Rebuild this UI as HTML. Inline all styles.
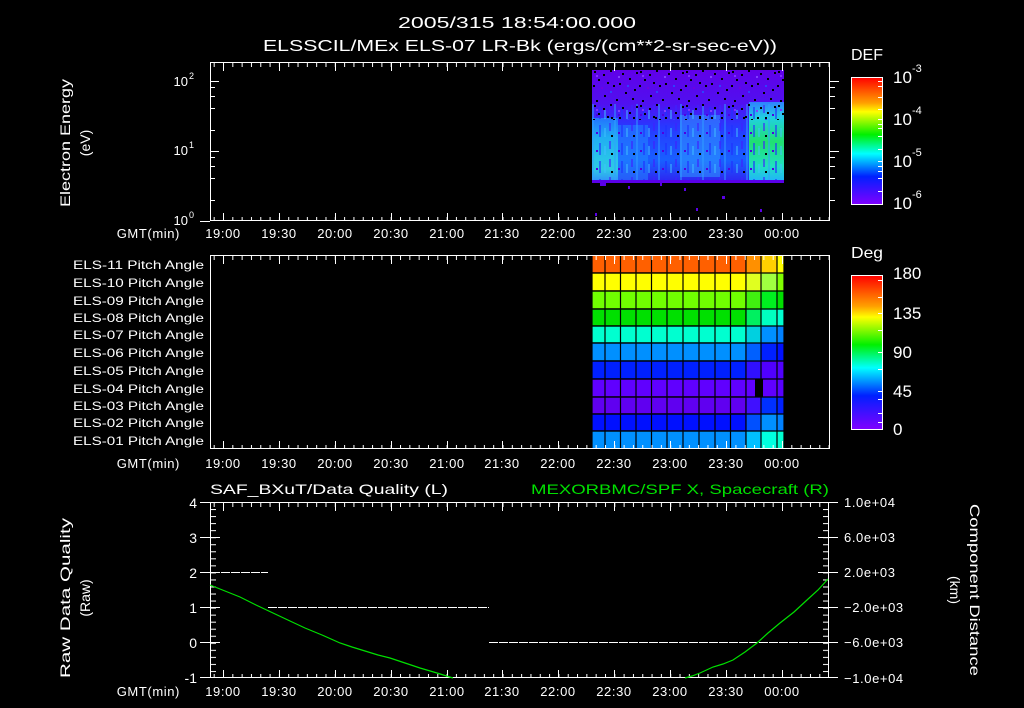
<!DOCTYPE html>
<html><head><meta charset="utf-8"><style>
html,body{margin:0;padding:0;background:#000;}
svg{display:block;}
text{font-family:"Liberation Sans",sans-serif;fill:#fff;}
.t{letter-spacing:0.6px;}
</style></head><body>
<svg width="1024" height="708" viewBox="0 0 1024 708" xmlns="http://www.w3.org/2000/svg">
<defs>
<pattern id="minT" patternUnits="userSpaceOnUse" x="223" y="0" width="9.3167" height="708"><rect x="0" y="0" width="1" height="708" fill="#fff"/></pattern>
<pattern id="dqY" patternUnits="userSpaceOnUse" x="0" y="502" width="1024" height="7.04"><rect x="0" y="0" width="1024" height="1" fill="#fff"/></pattern>
<linearGradient id="rain" x1="0" y1="0" x2="0" y2="1">
<stop offset="0" stop-color="#ff0000"/><stop offset="0.2" stop-color="#ffa000"/><stop offset="0.27" stop-color="#ffff00"/>
<stop offset="0.45" stop-color="#00f000"/><stop offset="0.6" stop-color="#00ffff"/><stop offset="0.78" stop-color="#0020ff"/><stop offset="1" stop-color="#8000ff"/>
</linearGradient>
<linearGradient id="bg1" x1="0" y1="0" x2="0" y2="1">
<stop offset="0" stop-color="#6000e8"/><stop offset="0.3" stop-color="#5010f0"/><stop offset="0.5" stop-color="#2838ff"/><stop offset="0.8" stop-color="#1860ff"/><stop offset="1" stop-color="#3020f0"/>
</linearGradient>
<linearGradient id="grn" x1="0" y1="0" x2="0" y2="1">
<stop offset="0" stop-color="#3080ff"/><stop offset="0.2" stop-color="#20d0e0"/><stop offset="0.5" stop-color="#20e070"/><stop offset="0.8" stop-color="#20e0c0"/><stop offset="1" stop-color="#20b0ff"/>
</linearGradient>
<linearGradient id="cy" x1="0" y1="0" x2="0" y2="1">
<stop offset="0" stop-color="#2080ff"/><stop offset="0.3" stop-color="#20c0f0"/><stop offset="0.8" stop-color="#30e0e0"/><stop offset="1" stop-color="#30a0ff"/>
</linearGradient>
<pattern id="noise" patternUnits="userSpaceOnUse" x="592" y="70" width="46" height="34">
<rect x="2" y="1" width="2" height="2" fill="#000"/><rect x="11" y="4" width="2" height="2" fill="#000"/>
<rect x="18" y="0" width="2" height="2" fill="#000"/><rect x="6" y="9" width="2" height="2" fill="#000"/>
<rect x="15" y="12" width="2" height="2" fill="#000"/><rect x="21" y="15" width="2" height="2" fill="#000"/>
<rect x="1" y="15" width="2" height="2" fill="#000"/><rect x="9" y="17" width="2" height="2" fill="#7000e0"/>
<rect x="30" y="3" width="2" height="2" fill="#000"/><rect x="37" y="8" width="2" height="2" fill="#000"/>
<rect x="27" y="13" width="2" height="2" fill="#000"/><rect x="42" y="19" width="2" height="2" fill="#000"/>
<rect x="33" y="22" width="2" height="2" fill="#000"/><rect x="12" y="25" width="2" height="2" fill="#000"/>
<rect x="24" y="29" width="2" height="2" fill="#000"/><rect x="4" y="30" width="2" height="2" fill="#000"/>
<rect x="40" y="28" width="2" height="2" fill="#000"/><rect x="18" y="21" width="2" height="2" fill="#3040ff"/>
<rect x="4" y="5" width="2" height="2" fill="#8030ff"/><rect x="35" y="15" width="2" height="2" fill="#3040ff"/>
<rect x="26" y="6" width="2" height="2" fill="#8040ff"/><rect x="44" y="2" width="2" height="2" fill="#000"/>
</pattern>
<pattern id="noise2" patternUnits="userSpaceOnUse" x="592" y="104" width="22" height="18">
<rect x="0" y="0" width="2" height="18" fill="#30a0ff" opacity="0.5"/><rect x="7" y="3" width="2" height="12" fill="#2030ff" opacity="0.6"/>
<rect x="12" y="6" width="2" height="9" fill="#40c0ff" opacity="0.5"/><rect x="4" y="10" width="2" height="2" fill="#5000e0"/>
<rect x="17" y="1" width="2" height="8" fill="#4020ff" opacity="0.6"/><rect x="19" y="13" width="2" height="2" fill="#000"/>
</pattern>
</defs>

<!-- Title -->
<text x="517" y="28" font-size="16" text-anchor="middle" textLength="238" lengthAdjust="spacingAndGlyphs">2005/315 18:54:00.000</text>
<text x="520" y="51" font-size="16" text-anchor="middle" textLength="514" lengthAdjust="spacingAndGlyphs">ELSSCIL/MEx ELS-07 LR-Bk  (ergs/(cm**2-sr-sec-eV))</text>

<!-- ========== TOP PANEL ========== -->
<rect x="592" y="70" width="192" height="113" fill="url(#bg1)"/>
<rect x="592" y="118" width="26" height="64" fill="url(#cy)" opacity="0.85"/>
<rect x="618" y="125" width="30" height="55" fill="#2090ff" opacity="0.5"/>
<rect x="680" y="115" width="40" height="62" fill="#30a0ff" opacity="0.5"/>
<rect x="749" y="102" width="35" height="80" fill="url(#grn)"/>
<rect x="592" y="104" width="192" height="76" fill="url(#noise2)"/>
<rect x="592" y="70" width="192" height="50" fill="url(#noise)"/>
<rect x="592" y="180" width="192" height="3" fill="#5a00e8"/>
<rect x="600" y="183" width="6" height="3" fill="#5a00e8"/><rect x="628" y="186" width="2" height="3" fill="#5a00e8"/>
<rect x="660" y="183" width="2" height="3" fill="#5a00e8"/><rect x="684" y="188" width="2" height="3" fill="#5a00e8"/>
<rect x="722" y="196" width="3" height="3" fill="#5a00e8"/><rect x="696" y="208" width="2" height="3" fill="#5a00e8"/>
<rect x="760" y="209" width="2" height="3" fill="#5a00e8"/><rect x="595" y="213" width="2" height="3" fill="#5a00e8"/>
<!-- frame -->
<rect x="210.5" y="62.5" width="619" height="158" fill="none" stroke="#fff" stroke-width="1"/>
<rect x="210" y="63" width="620" height="4" fill="url(#minT)"/>
<rect x="210" y="217" width="620" height="4" fill="url(#minT)"/>
<g stroke="#fff" stroke-width="1">
<path d="M223.5 63v8M279.5 63v8M335.5 63v8M391.5 63v8M447.5 63v8M502.5 63v8M558.5 63v8M614.5 63v8M670.5 63v8M726.5 63v8M782.5 63v8"/>
<path d="M223.5 221v-8M279.5 221v-8M335.5 221v-8M391.5 221v-8M447.5 221v-8M502.5 221v-8M558.5 221v-8M614.5 221v-8M670.5 221v-8M726.5 221v-8M782.5 221v-8"/>
<path d="M210 81.5h9M210 151.5h9M210 200.5h5M210 178.5h5M210 166.5h5M210 157.5h5M210 130.5h5M210 108.5h5M210 96.5h5M210 87.5h5"/>
<path d="M830 81.5h9M830 151.5h9M830 200.5h5M830 178.5h5M830 166.5h5M830 157.5h5M830 130.5h5M830 108.5h5M830 96.5h5M830 87.5h5"/>
<path d="M200 221.5h10"/>
</g>
<text x="188" y="86" font-size="13" text-anchor="end">10</text><text x="189" y="79" font-size="9">2</text>
<text x="188" y="155" font-size="13" text-anchor="end">10</text><text x="189" y="148" font-size="9">1</text>
<text x="188" y="225" font-size="13" text-anchor="end">10</text><text x="189" y="218" font-size="9">0</text>
<text transform="translate(70,143) rotate(-90)" font-size="14" text-anchor="middle" textLength="128" lengthAdjust="spacingAndGlyphs">Electron Energy</text>
<text transform="translate(90,143) rotate(-90)" font-size="14" text-anchor="middle">(eV)</text>
<!-- DEF colorbar -->
<text x="851" y="60" font-size="16" textLength="32" lengthAdjust="spacingAndGlyphs">DEF</text>
<rect x="851.5" y="77.5" width="31" height="127" fill="url(#rain)" stroke="#fff" stroke-width="1"/>
<g stroke="#fff"><path d="M878 81.5h4M878 86.5h4M878 97.5h4M878 109.5h4M878 119.5h4M878 124.5h4M878 128.5h4M878 136.5h4M878 149.5h4M878 161.5h4M878 166.5h4M878 171.5h4M878 178.5h4M878 191.5h4"/></g>
<text x="893" y="83" font-size="17">10</text><text x="912" y="72" font-size="11">-3</text>
<text x="893" y="125" font-size="17">10</text><text x="912" y="114" font-size="11">-4</text>
<text x="893" y="167" font-size="17">10</text><text x="912" y="156" font-size="11">-5</text>
<text x="893" y="209" font-size="17">10</text><text x="912" y="198" font-size="11">-6</text>

<!-- time labels top -->
<g font-size="13" text-anchor="middle" class="t">
<text x="180" y="238" text-anchor="end">GMT(min)</text>
<text x="223" y="238">19:00</text><text x="279" y="238">19:30</text><text x="335" y="238">20:00</text><text x="391" y="238">20:30</text><text x="447" y="238">21:00</text><text x="502" y="238">21:30</text><text x="558" y="238">22:00</text><text x="614" y="238">22:30</text><text x="670" y="238">23:00</text><text x="726" y="238">23:30</text><text x="782" y="238">00:00</text>
</g>

<!-- ========== PITCH PANEL ========== -->
<g stroke="#000" stroke-width="1.2">
<rect x="592" y="255" width="154" height="18" fill="#ff6000"/>
<rect x="592" y="273" width="154" height="18" fill="#ffff00"/>
<rect x="592" y="291" width="154" height="18" fill="#70ff00"/>
<rect x="592" y="309" width="154" height="17" fill="#00e000"/>
<rect x="592" y="326" width="154" height="17" fill="#00ffd0"/>
<rect x="592" y="343" width="154" height="18" fill="#0090ff"/>
<rect x="592" y="361" width="154" height="18" fill="#0020ff"/>
<rect x="592" y="379" width="154" height="18" fill="#6000ff"/>
<rect x="592" y="397" width="154" height="17" fill="#6000f0"/>
<rect x="592" y="414" width="154" height="17" fill="#0010ff"/>
<rect x="592" y="431" width="154" height="18" fill="#0090ff"/>
</g>
<g>
<rect x="746" y="255" width="15" height="18" fill="#ff9000"/><rect x="761" y="255" width="16" height="18" fill="#ffd000"/><rect x="777" y="255" width="7" height="18" fill="#ffff00"/>
<rect x="746" y="273" width="15" height="18" fill="#e0ff20"/><rect x="761" y="273" width="16" height="18" fill="#a0ff40"/><rect x="777" y="273" width="7" height="18" fill="#80ff00"/>
<rect x="746" y="291" width="15" height="18" fill="#40f010"/><rect x="761" y="291" width="16" height="18" fill="#00f020"/><rect x="777" y="291" width="7" height="18" fill="#00e000"/>
<rect x="746" y="309" width="15" height="17" fill="#00f060"/><rect x="761" y="309" width="16" height="17" fill="#00ffc0"/><rect x="777" y="309" width="7" height="17" fill="#00ffd0"/>
<rect x="746" y="326" width="15" height="17" fill="#00d0e0"/><rect x="761" y="326" width="16" height="17" fill="#0090ff"/><rect x="777" y="326" width="7" height="17" fill="#0080ff"/>
<rect x="746" y="343" width="15" height="18" fill="#0060ff"/><rect x="761" y="343" width="16" height="18" fill="#0020ff"/><rect x="777" y="343" width="7" height="18" fill="#0010ff"/>
<rect x="746" y="361" width="15" height="18" fill="#3010ff"/><rect x="761" y="361" width="16" height="18" fill="#5000ff"/><rect x="777" y="361" width="7" height="18" fill="#5000ff"/>
<rect x="746" y="379" width="9" height="18" fill="#6000ff"/><rect x="755" y="379" width="8" height="18" fill="#000"/><rect x="763" y="379" width="14" height="18" fill="#6000ff"/><rect x="777" y="379" width="7" height="18" fill="#5800ff"/>
<rect x="746" y="397" width="15" height="17" fill="#4010ff"/><rect x="761" y="397" width="16" height="17" fill="#0030ff"/><rect x="777" y="397" width="7" height="17" fill="#0020ff"/>
<rect x="746" y="414" width="15" height="17" fill="#0050ff"/><rect x="761" y="414" width="16" height="17" fill="#0090ff"/><rect x="777" y="414" width="7" height="17" fill="#0080ff"/>
<rect x="746" y="431" width="15" height="18" fill="#00c0ff"/><rect x="761" y="431" width="16" height="18" fill="#00ffe0"/><rect x="777" y="431" width="7" height="18" fill="#00ffd0"/>
</g>
<g stroke="#000" stroke-width="1.2" fill="none">
<path d="M605 255v194M620.5 255v194M636 255v194M651.5 255v194M667 255v194M683 255v194M699 255v194M715 255v194M730.5 255v194M746 255v194M761 255v194M777 255v194M784 255v194"/>
<path d="M592 273h192M592 291h192M592 309h192M592 326h192M592 343h192M592 361h192M592 379h192M592 397h192M592 414h192M592 431h192"/>
</g>
<rect x="210.5" y="255.5" width="619" height="193" fill="none" stroke="#fff" stroke-width="1"/>
<rect x="210" y="256" width="620" height="4" fill="url(#minT)"/>
<rect x="210" y="445" width="620" height="4" fill="url(#minT)"/>
<g stroke="#fff" stroke-width="1">
<path d="M223.5 256v8M279.5 256v8M335.5 256v8M391.5 256v8M447.5 256v8M502.5 256v8M558.5 256v8M614.5 256v8M670.5 256v8M726.5 256v8M782.5 256v8"/>
<path d="M223.5 449v-8M279.5 449v-8M335.5 449v-8M391.5 449v-8M447.5 449v-8M502.5 449v-8M558.5 449v-8M614.5 449v-8M670.5 449v-8M726.5 449v-8M782.5 449v-8"/>
</g>
<g font-size="12" text-anchor="end">
<text x="204" y="269" textLength="131" lengthAdjust="spacingAndGlyphs">ELS-11 Pitch Angle</text>
<text x="204" y="287" textLength="131" lengthAdjust="spacingAndGlyphs">ELS-10 Pitch Angle</text>
<text x="204" y="305" textLength="131" lengthAdjust="spacingAndGlyphs">ELS-09 Pitch Angle</text>
<text x="204" y="322" textLength="131" lengthAdjust="spacingAndGlyphs">ELS-08 Pitch Angle</text>
<text x="204" y="339" textLength="131" lengthAdjust="spacingAndGlyphs">ELS-07 Pitch Angle</text>
<text x="204" y="357" textLength="131" lengthAdjust="spacingAndGlyphs">ELS-06 Pitch Angle</text>
<text x="204" y="375" textLength="131" lengthAdjust="spacingAndGlyphs">ELS-05 Pitch Angle</text>
<text x="204" y="393" textLength="131" lengthAdjust="spacingAndGlyphs">ELS-04 Pitch Angle</text>
<text x="204" y="410" textLength="131" lengthAdjust="spacingAndGlyphs">ELS-03 Pitch Angle</text>
<text x="204" y="427" textLength="131" lengthAdjust="spacingAndGlyphs">ELS-02 Pitch Angle</text>
<text x="204" y="445" textLength="131" lengthAdjust="spacingAndGlyphs">ELS-01 Pitch Angle</text>
</g>
<!-- Deg colorbar -->
<text x="851" y="258" font-size="16" textLength="32" lengthAdjust="spacingAndGlyphs">Deg</text>
<rect x="851.5" y="275.5" width="31" height="154" fill="url(#rain)" stroke="#fff" stroke-width="1"/>
<g stroke="#fff"><path d="M878 280.5h4M878 297.5h4M878 313.5h4M878 330.5h4M878 352.5h4M878 369.5h4M878 391.5h4M878 399.5h4M878 413.5h4M878 422.5h4"/></g>
<g font-size="17">
<text x="893" y="279">180</text><text x="893" y="319">135</text><text x="893" y="358">90</text><text x="893" y="397">45</text><text x="893" y="435">0</text>
</g>
<g font-size="13" text-anchor="middle" class="t">
<text x="180" y="468" text-anchor="end">GMT(min)</text>
<text x="223" y="468">19:00</text><text x="279" y="468">19:30</text><text x="335" y="468">20:00</text><text x="391" y="468">20:30</text><text x="447" y="468">21:00</text><text x="502" y="468">21:30</text><text x="558" y="468">22:00</text><text x="614" y="468">22:30</text><text x="670" y="468">23:00</text><text x="726" y="468">23:30</text><text x="782" y="468">00:00</text>
</g>

<!-- ========== BOTTOM PANEL ========== -->
<text x="210" y="494" font-size="14" textLength="238" lengthAdjust="spacingAndGlyphs">SAF_BXuT/Data Quality (L)</text>
<text x="829" y="494" font-size="14" text-anchor="end" style="fill:#00e000" textLength="298" lengthAdjust="spacingAndGlyphs">MEXORBMC/SPF X, Spacecraft (R)</text>
<rect x="210.5" y="502.5" width="618" height="175" fill="none" stroke="#fff" stroke-width="1"/>
<rect x="210" y="503" width="618" height="4" fill="url(#minT)"/>
<rect x="210" y="674" width="618" height="4" fill="url(#minT)"/>
<rect x="211" y="502" width="5" height="176" fill="url(#dqY)"/>
<rect x="823" y="502" width="5" height="176" fill="url(#dqY)"/>
<g stroke="#fff" stroke-width="1">
<path d="M223.5 503v8M279.5 503v8M335.5 503v8M391.5 503v8M447.5 503v8M502.5 503v8M558.5 503v8M614.5 503v8M670.5 503v8M726.5 503v8M782.5 503v8"/>
<path d="M223.5 678v-8M279.5 678v-8M335.5 678v-8M391.5 678v-8M447.5 678v-8M502.5 678v-8M558.5 678v-8M614.5 678v-8M670.5 678v-8M726.5 678v-8M782.5 678v-8"/>
<path d="M200 502.5h20M200 537.5h20M200 572.5h20M200 607.5h20M200 642.5h20M200 677.5h20"/>
<path d="M818 502.5h20M818 537.5h20M818 572.5h20M818 607.5h20M818 642.5h20M818 677.5h20"/>
</g>
<g stroke="#fff" stroke-width="1" stroke-dasharray="9 1">
<path d="M221 572.5h47"/>
<path d="M268 607.5h221"/>
<path d="M489 642.5h330"/>
</g>
<g fill="none" stroke="#00e000" stroke-width="1.2">
<path d="M210 585 L225 591 L240 597 L256 605 L273 613 L290 621 L305 628 L322 635 L340 643 L352 647 L365 651 L378 655 L390 658 L405 663 L420 668 L437 673 L453 678"/>
<path d="M685 678 L692 676 L700 673 L713 667 L723 664 L733 660 L745 652 L757 643 L768 633 L780 623 L794 612 L807 600 L818 590 L828 579"/>
</g>
<g font-size="14" text-anchor="end">
<text x="197" y="508">4</text><text x="197" y="543">3</text><text x="197" y="578">2</text><text x="197" y="613">1</text><text x="197" y="648">0</text><text x="197" y="683">-1</text>
</g>
<g font-size="13" class="t">
<text x="844" y="507">1.0e+04</text><text x="844" y="542">6.0e+03</text><text x="844" y="577">2.0e+03</text>
<text x="844" y="612">−2.0e+03</text><text x="844" y="647">−6.0e+03</text><text x="844" y="683">−1.0e+04</text>
</g>
<text transform="translate(70,598) rotate(-90)" font-size="14" text-anchor="middle" textLength="160" lengthAdjust="spacingAndGlyphs">Raw Data Quality</text>
<text transform="translate(90,598) rotate(-90)" font-size="14" text-anchor="middle">(Raw)</text>
<text transform="translate(970,590) rotate(90)" font-size="14" text-anchor="middle" textLength="172" lengthAdjust="spacingAndGlyphs">Component Distance</text>
<text transform="translate(950,590) rotate(90)" font-size="14" text-anchor="middle">(km)</text>
<g font-size="13" text-anchor="middle" class="t">
<text x="180" y="696" text-anchor="end">GMT(min)</text>
<text x="223" y="696">19:00</text><text x="279" y="696">19:30</text><text x="335" y="696">20:00</text><text x="391" y="696">20:30</text><text x="447" y="696">21:00</text><text x="502" y="696">21:30</text><text x="558" y="696">22:00</text><text x="614" y="696">22:30</text><text x="670" y="696">23:00</text><text x="726" y="696">23:30</text><text x="782" y="696">00:00</text>
</g>
</svg>
</body></html>
